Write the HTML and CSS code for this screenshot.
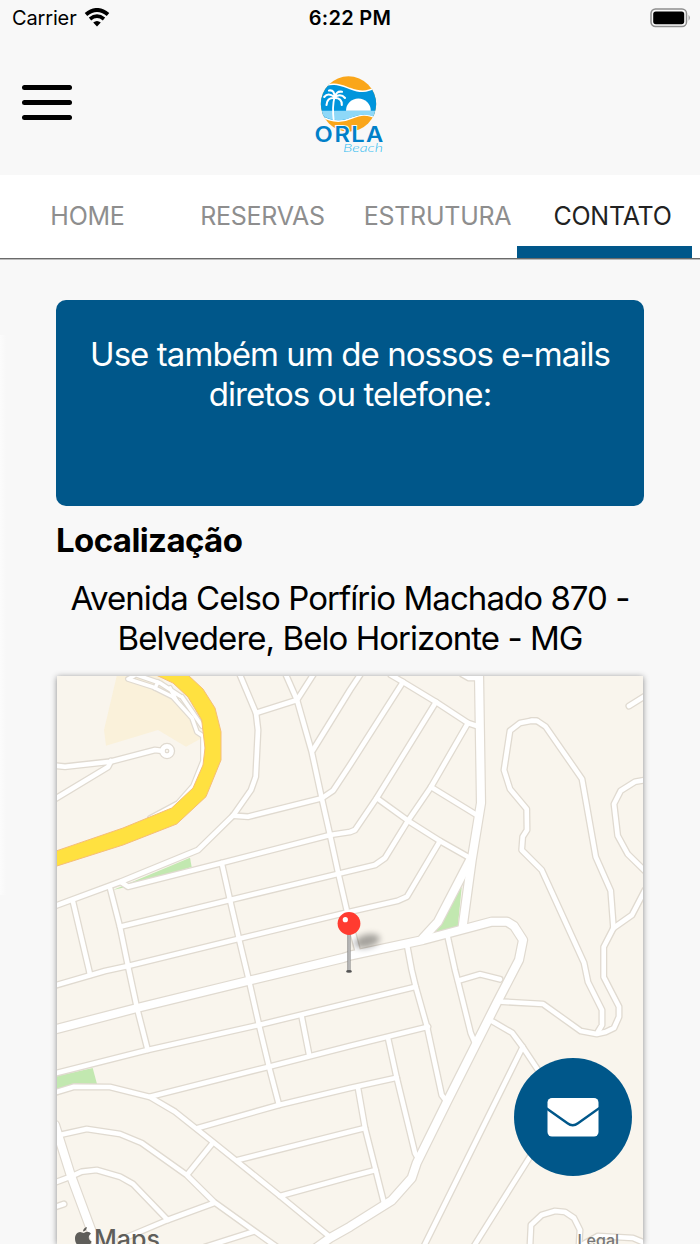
FILE: index.html
```
<!DOCTYPE html>
<html lang="pt-BR">
<head>
    <meta charset="UTF-8">
    <meta name="viewport" content="width=device-width, initial-scale=1.0">
    <title>Orla Beach - Contato</title>
    <link rel="stylesheet" href="styles.css">
</head>
<body>

    <!-- Status bar -->
    <div class="status-bar">
        <div class="carrier">
            <span>Carrier</span>
            <svg class="wifi" viewBox="0 0 26 19" width="26" height="19">
                <path d="M2 6.5 Q13 -2.5 24 6.5" fill="none" stroke="#000" stroke-width="4"/>
                <path d="M6 11 Q13 5.2 20 11" fill="none" stroke="#000" stroke-width="3.6"/>
                <path d="M9.2 14.6 Q13 11.6 16.8 14.6 L13 18.5 Z"/>
            </svg>
        </div>
        <div class="clock">6:22 PM</div>
        <div class="battery">
            <svg viewBox="0 0 42 20" width="42" height="20">
                <rect x="1" y="1" width="35.5" height="17.6" rx="4.5" fill="none" stroke="#8e8e8e" stroke-width="1.5"/>
                <rect x="3.2" y="3.4" width="31" height="12.8" rx="2.6"/>
                <path d="M38.6 6.8 Q41 9.7 38.6 12.8 Z" fill="#8e8e8e"/>
            </svg>
        </div>
    </div>

    <!-- Header -->
    <div class="header">
        <button class="menu" aria-label="Menu"><span></span><span></span><span></span></button>
        <svg class="logo" viewBox="0 0 70 78" width="70" height="78">
            <defs><clipPath id="sun"><circle cx="33.5" cy="29" r="27.7"/></clipPath></defs>
            <g clip-path="url(#sun)">
                <rect width="70" height="60" fill="#faa61a"/>
                <path d="M4 14 C16 6 25 10 35 13.5 C44 17 51 18 62 12 V44 C52 38 45 40 37 43 C26 48 15 47 4 40 Z" fill="#0095dc" stroke="#fff" stroke-width="1.5"/>
                <path d="M5 35.8 H62 V43 C52 38.5 45 39 37 42.3 C26 47 15 46 5 39 Z" fill="#8ed8f8"/>
                <path d="M31 35.8 A12.4 12.3 0 0 1 55.8 35.8 Z" fill="#fff"/>
            </g>
            <path d="M19.5 22 C17.5 30 17.8 38 18.7 45.5" fill="none" stroke="#fff" stroke-width="1.8"/>
            <g fill="none" stroke="#fff" stroke-width="2.1" stroke-linecap="round">
                <path d="M19.5 23 Q20 14.5 14 15.5M19.5 23 Q21 15.5 27 16.8M19.5 22 Q13 17 9.2 22M19.5 22 Q26 18 30 23M19 23 Q12 22.5 11.5 30M20 23 Q27 23 26.8 30"/>
            </g>
            <text class="logo-name" transform="scale(1.1 1)" x="-0.4 17.8 32.9 46.4" y="67.5">ORLA</text>
            <text class="logo-sub" x="28" y="77" textLength="40" lengthAdjust="spacingAndGlyphs">Beach</text>
        </svg>
    </div>

    <!-- Tabs -->
    <div class="tabs">
        <a href="#">HOME</a>
        <a href="#">RESERVAS</a>
        <a href="#">ESTRUTURA</a>
        <a href="#" class="active">CONTATO</a>
        <div class="tab-indicator"></div>
    </div>

    <!-- Content -->
    <div class="content">
        <div class="notice">Use também um de nossos e-mails<br>diretos ou telefone:</div>
        <h2>Localização</h2>
        <p class="address">Avenida Celso Porfírio Machado 870 -<br>Belvedere, Belo Horizonte - MG</p>

        <div class="map">
            <svg class="map-canvas" viewBox="57 676 586 568" width="586" height="568">
                <defs>
                    <g id="streets">
                        <path d="M240 675L256 713L258 730L255.7 776.7L251 790L233 815.7L198 850L120 882L55 906"/>
                        <path d="M256 713L297 700L313 675"/>
                        <path d="M286 675L297 700L311.7 751.7L321.7 798L330 835L338 872L346.7 910L358 952"/>
                        <path d="M233 815.7L248 816.7L321.7 798.3L333 790.7L350 765L403 682"/>
                        <path d="M313 750L350 690L360 675"/>
                        <path d="M391 675L403 682L436 702L468 723L477 726"/>
                        <path d="M436 702L376.7 798L355 830L350 832L330 835L221.7 863L128 886.7L121 882"/>
                        <path d="M468 723L431 787L408 820.7L385 858L375 865L350 871L230 900L120 926.7"/>
                        <path d="M431 787L476.7 815"/>
                        <path d="M376.7 798L408 820.7L440 841L470 858"/>
                        <path d="M440 841L407 896.7L398 900.7L350 911.7L238 939L128 966L105 971L55 985.5"/>
                        <path d="M73 901.7L89 970L90 975"/>
                        <path d="M110 888L120 927L128 966L137 1008L147.7 1050"/>
                        <path d="M221.7 863L230 900L239 939L249 980.7L259 1025L269 1066.7L279 1105"/>
                        <path d="M536.7 721L531.7 720.7L520 723L510 730.7L504 770L510 789L526.7 809L527 830L522.7 836.7L521.7 850L541.7 870L584 962.7L588 982L602 1010V1025L598 1031.7"/>
                        <path d="M531.7 720.7H536.7L545.7 726.7L582 779L595.7 856.7L610.7 890.7L613.5 928L603.7 947V977L619 1006.7V1016.7L614 1028L605.7 1032L596.7 1034L580.7 1031L543 1004L501.7 1001.7"/>
                        <path d="M613.5 928L632 915L645 890"/>
                        <path d="M645 780L635 781.7L620.7 790.7L614 804L617.7 835.7L627.7 854L645 871"/>
                        <path d="M629 706L645 696"/>
                        <path d="M462 674L469 678H478"/>
                        <path d="M407 945L411.7 970L415.7 986.7L427 1026.7L441.7 1095L446.7 1101.7"/>
                        <path d="M447.7 936.7L455 970L458 981.7L470.7 1033L475 1043"/>
                        <path d="M458 980.7L480 974.3L500 979.3"/>
                        <path d="M55 1073.5L147.7 1050L259 1025L350 1002.7L415.7 986.7"/>
                        <path d="M150 1096.7L269 1066.7L350 1046L428 1026.7"/>
                        <path d="M301.7 1016.7L309 1054"/>
                        <path d="M198 1128L279 1105L350 1088L396.7 1077.7"/>
                        <path d="M388 1038L396.7 1077.7L415 1153L419 1160"/>
                        <path d="M238 1160L350 1131.7L365 1128"/>
                        <path d="M358 1088L365 1128L384 1203"/>
                        <path d="M280 1196L350 1176.7L375.7 1170"/>
                        <path d="M55 1092.5L74 1086.7L110 1087L150 1097L175 1111.7L212.7 1141.7L280 1196L330 1237"/>
                        <path d="M55 1136L86.7 1129L120 1134L141.7 1143L186.7 1175L214 1202L253 1230L277 1247"/>
                        <path d="M212.7 1143L187.7 1174"/>
                        <path d="M55 1182.5L70.7 1176.7L81.7 1171.7L96.7 1170L120 1176.7L133 1184L167.7 1220"/>
                        <path d="M214 1203L167.7 1220L140 1231.7L120 1240"/>
                        <path d="M253 1231.7L205 1247"/>
                        <path d="M55 1207L64 1204"/>
                        <path d="M493 1021.7L512 1032.7L522.7 1047L540 1073"/>
                        <path d="M522.7 1047L424 1246"/>
                        <path d="M530 1156.7L474 1246"/>
                        <path d="M530 1246L531 1225L541.7 1215L555 1211L565 1212L574 1218L580 1230L579 1246"/>
                        <path d="M580 1246L598 1236L633 1238L645 1243"/>
                        <path d="M55 765.7L65 766.7L110 761.7L155 750L163 751"/>
                        <path d="M55 799L108 767L111 761"/>
                        <circle cx="167" cy="751" r="4.6"/>
                    </g>
                    <g id="ramps">
                        <path d="M134 676L128 679L153 687L173 697L192 718L197 732L203 736V761L193 786L178 803L150 818"/>
                        <path d="M134 674L160 683L180 696M158 682L155 688M170 688L176 700M182 697L202 726"/>
                    </g>
                    <g id="avenues">
                        <path d="M55 1029.4L137 1008L249 980.7L343 958L350 955.7L423 940L491.7 921.7H507L514 926L523 940L519 960L496.7 1003L447 1101.7L416.7 1163L411.7 1178L391.7 1200.5L350 1226.7L330 1238L316 1248"/>
                        <path d="M479 674L481 803L471.7 860L462.5 928"/>
                        <path d="M470 860L438 921.7L423 938"/>
                        <path d="M55 1125L70.7 1175L90 1227L97 1246"/>
                    </g>
                </defs>

                <!-- Parks and land -->
                <path class="sand" d="M116.7 676H160L202 738L186 746.7L158 730L106 745.7L104 730Z"/>
                <path class="park" d="M113 890L190 857.7L191.7 867L130 886Z"/>
                <path class="park" d="M461.7 887L457.7 928L434 932Z"/>
                <path class="park" d="M57 1076L92.7 1068L97 1084L57 1091Z"/>

                <!-- Streets: border first, white on top -->
                <use href="#ramps" class="ramp-border"/>
                <use href="#streets" class="street-border"/>
                <use href="#avenues" class="avenue-border"/>
                <use href="#ramps" class="ramp"/>
                <use href="#streets" class="street"/>
                <use href="#avenues" class="avenue"/>
                <circle cx="167" cy="751" r="1.8" fill="#f9f5ed" stroke="#e0dad0"/>
                <path class="highway" d="M156 675L173 683L188 697L201.7 720L205 748L203 765L193 788L171.7 808L123 828L56 851V866.3L123 845L176.7 824L206 796.7L221 760V731.7L215 708L203 689L188 675Z"/>
            </svg>

            <svg class="pin" viewBox="0 0 60 70" width="60" height="70">
                <defs>
                    <filter id="blur" x="-50%" y="-50%" width="200%" height="200%"><feGaussianBlur stdDeviation="3"/></filter>
                    <linearGradient id="needle"><stop offset="0" stop-color="#777"/><stop offset=".5" stop-color="#ccc"/><stop offset="1" stop-color="#888"/></linearGradient>
                </defs>
                <ellipse cx="37" cy="35" rx="13" ry="6.5" transform="rotate(-14 37 35)" opacity=".34" filter="url(#blur)"/>
                <rect x="17.4" y="28" width="3.2" height="37" fill="url(#needle)"/>
                <ellipse cx="19" cy="65.4" rx="2.9" ry="1.4" fill="#555"/>
                <circle cx="19" cy="17.5" r="11.4" fill="#ff3b30"/>
                <circle cx="15.3" cy="13.7" r="2.6" fill="#fff"/>
            </svg>

            <div class="maps-brand">
                <svg viewBox="0 0 17 20" width="17" height="20">
                    <path d="M11.8 0C12 2.4 10.2 4.5 8.1 4.5C7.8 2.4 9.8 .3 11.8 0ZM8.6 5.9C9.5 5.9 10.7 4.8 12.3 4.8C14 4.9 15.2 5.6 16 6.8C12.7 8.9 13.2 13 16.6 14.4C15.8 16.7 14 19.7 12.1 19.8C10.7 19.8 10.3 18.9 8.7 18.9C7.1 18.9 6.6 19.8 5.3 19.8C2.4 19.7 0 15.2 0 11.4C0 7.4 2.5 5 5 4.9C6.5 4.9 7.7 5.9 8.6 5.9Z"/>
                </svg>
                <span>Maps</span>
            </div>
            <div class="legal">Legal</div>
        </div>
    </div>

    <!-- E-mail button -->
    <button class="mail-button" aria-label="E-mail">
        <svg viewBox="0 0 52 39" width="52" height="39">
            <rect x=".5" width="51" height="38.6" rx="4.5" fill="#fff"/>
            <path d="M-1 10L20.5 25.3Q25.7 29.4 31 25.3L52.5 10" fill="none" stroke="#00578a" stroke-width="2.4"/>
        </svg>
    </button>

</body>
</html>
```
FILE: styles.css
```
body {
    font-family: Inter, "Liberation Sans", sans-serif;
    margin: 0;
    background: linear-gradient(to right, #fcfcfc, #f8f8f8) 0 335px / 6px 560px no-repeat #f8f8f8;
    color: #000;
    height: 1244px;
    overflow: hidden;
}

/* Status bar */
.status-bar {
    display: grid;
    grid-template-columns: 1fr auto 1fr;
    align-items: center;
    height: 36px;
    padding: 0 8px 0 12px;
    font-size: 20px;
}

.carrier {
    display: flex;
    align-items: center;
    gap: 8px;
    letter-spacing: -0.15px;
}

.wifi {
    margin: -2px 0 0 -1px;
}

.clock {
    margin-left: -4px;
    font-weight: 600;
    letter-spacing: 0.3px;
}

.battery {
    display: flex;
    justify-content: flex-end;
    margin-top: -1px;
}

/* Header */
.header {
    display: grid;
    grid-template-columns: 1fr auto 1fr;
    height: 139px;
    padding: 0 22px;
}

.menu {
    display: flex;
    flex-direction: column;
    gap: 9.5px;
    width: 50px;
    margin-top: 49px;
    padding: 0;
    border: none;
    background: none;
}

.menu span {
    width: 50px;
    height: 5.3px;
    border-radius: 3px;
    background-color: #000;
}

.logo {
    margin-top: 39px;
    overflow: visible;
}

.logo-name {
    font-size: 21.5px;
    font-weight: 600;
    fill: #0080c9;
    stroke: #f8f8f8;
    stroke-width: 2px;
    paint-order: stroke;
}

.logo-sub {
    font-family: Lato, cursive;
    font-size: 11px;
    font-style: italic;
    font-weight: 300;
    fill: #35bdf0;
}

/* Tabs */
.tabs {
    display: grid;
    grid-template-columns: repeat(4, 175px);
    grid-template-rows: 71px 12px;
    background-color: #fff;
    border-bottom: 1px solid #6a6a6a;
    box-shadow: 0 1px #bbb;
}

.tabs a {
    display: flex;
    align-items: center;
    justify-content: center;
    padding-top: 11px;
    color: #8e8e8e;
    font-size: 25px;
    letter-spacing: -0.25px;
    text-decoration: none;
}

.tabs .active {
    color: #222;
}

.tab-indicator {
    grid-column: 1 / -1;
    width: 175px;
    margin-left: 517px;
    background-color: #00578a;
}

/* Main content */
.content {
    padding: 41px 56px 0;
}

.notice {
    box-sizing: border-box;
    height: 206px;
    padding-top: 34px;
    border-radius: 10px;
    background-color: #00578a;
    color: #fff;
    font-size: 33px;
    letter-spacing: -0.93px;
    line-height: 40px;
    text-align: center;
}

.content h2 {
    margin: 14px 0 0;
    font-size: 33px;
    letter-spacing: -0.6px;
    line-height: 40px;
}

.address {
    margin: 18px 0;
    font-size: 33px;
    letter-spacing: -0.95px;
    line-height: 40px;
    text-align: center;
    white-space: nowrap;
}

/* Map */
.map {
    position: relative;
    width: 586px;
    height: 568px;
    margin: 0 auto;
    box-shadow: 0 1px 6px rgba(0, 0, 0, 0.45);
    background-color: #f9f5ed;
}

.map-canvas {
    display: block;
}

.street-border, .street, .avenue-border, .avenue, .ramp-border, .ramp {
    fill: none;
    stroke: #fff;
    stroke-linejoin: round;
    stroke-linecap: round;
}

.street-border {
    stroke: #e0dad0;
    stroke-width: 7.2px;
}

.street {
    stroke-width: 4.6px;
}

.avenue-border {
    stroke: #e0dad0;
    stroke-width: 10.4px;
}

.avenue {
    stroke-width: 8px;
}

.ramp-border {
    stroke: #e0dad0;
    stroke-width: 6px;
}

.ramp {
    stroke-width: 3.6px;
}

.sand {
    fill: #faf1da;
}

.park {
    fill: #c2e8b0;
}

.highway {
    fill: #ffe140;
    stroke: #f5bd78;
    stroke-width: 1px;
}

.pin {
    position: absolute;
    left: 273px;
    top: 230px;
}

.maps-brand {
    position: absolute;
    left: 18px;
    top: 551px;
    display: flex;
    gap: 2px;
    color: #5f5e5a;
    fill: #5f5e5a;
    font-size: 25px;
    font-weight: 500;
    line-height: 24px;
}

.legal {
    position: absolute;
    right: 24px;
    top: 555px;
    color: #777;
    font-size: 16px;
    font-weight: 500;
    line-height: 18px;
}

/* E-mail button */
.mail-button {
    position: fixed;
    left: 514px;
    top: 1058px;
    display: flex;
    align-items: center;
    justify-content: center;
    width: 118px;
    height: 118px;
    padding: 0;
    border: none;
    border-radius: 50%;
    background-color: #00578a;
}
```
